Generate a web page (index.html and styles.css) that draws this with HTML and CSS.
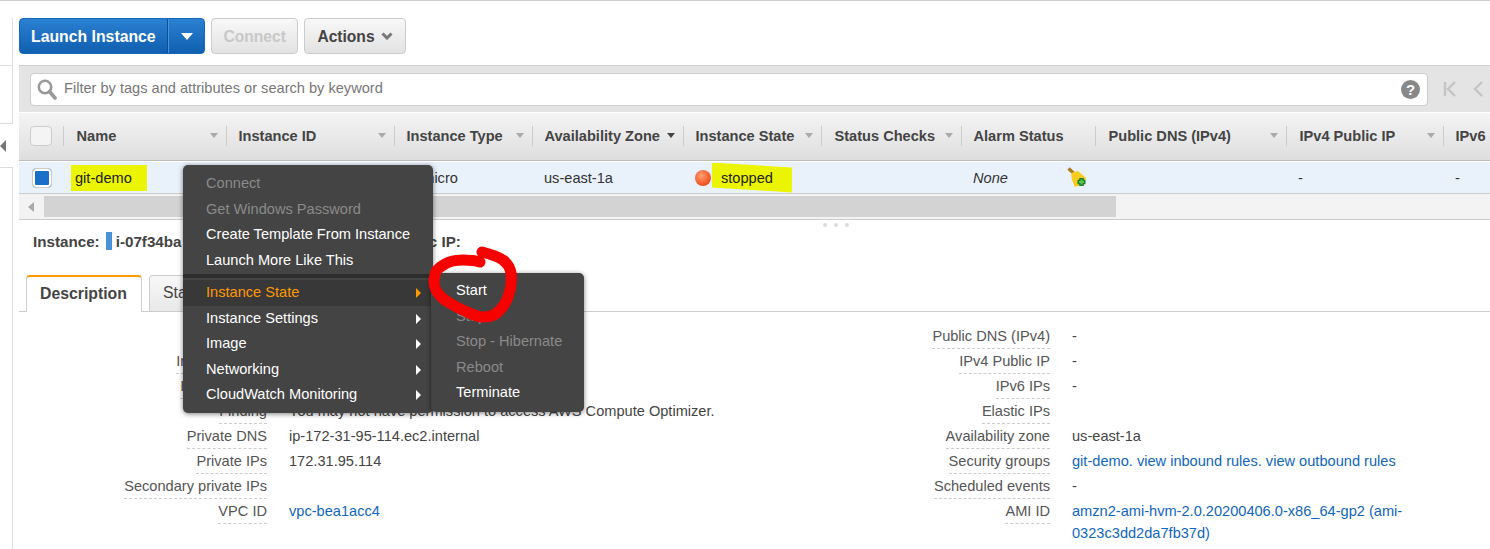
FILE: index.html
```html
<!DOCTYPE html>
<html>
<head>
<meta charset="utf-8">
<title>EC2 Instances</title>
<link rel="stylesheet" href="styles.css">
</head>
<body>
<div class="page">
	<div class="rail">
		<div class="rail-a"></div>
		<div class="rail-b"></div>
		<div class="rail-c"><span class="rail-arrow"></span></div>
		<div class="rail-d"></div>
	</div>
	<div class="main">
		<div class="toolbar">
			<div class="btn-launch">
				<span class="launch-text">Launch Instance</span>
				<span class="launch-drop"><span class="caret-white"></span></span>
			</div>
			<div class="btn btn-off">Connect</div>
			<div class="btn btn-actions">Actions
				<svg class="chev" width="12" height="8" viewBox="0 0 12 8"><path d="M1.5 1.5 L6 6 L10.5 1.5" fill="none" stroke="#777" stroke-width="3"/></svg>
			</div>
		</div>

		<div class="filterbar">
			<div class="filter">
				<svg class="search" width="20" height="22" viewBox="0 0 20 22"><circle cx="8" cy="9" r="6.2" fill="none" stroke="#999" stroke-width="2.6"/><path d="M12.5 13.5 L18 20" stroke="#999" stroke-width="3.6" stroke-linecap="round"/></svg>
				<span class="filter-text">Filter by tags and attributes or search by keyword</span>
				<span class="help">?</span>
			</div>
			<div class="pager">
				<svg width="14" height="18" viewBox="0 0 14 18"><path d="M2 2 V16 M12 2 L5 9 L12 16" fill="none" stroke="#c4c4c4" stroke-width="2.4"/></svg>
				<svg width="10" height="18" viewBox="0 0 10 18"><path d="M9 2 L2 9 L9 16" fill="none" stroke="#c4c4c4" stroke-width="2.4"/></svg>
			</div>
		</div>

		<div class="thead">
			<div class="col-check"><span class="check"></span></div>
			<div class="th th-wide w-name">Name<span class="sort"></span></div>
			<div class="th w-id">Instance ID<span class="sort"></span></div>
			<div class="th w-type">Instance Type<span class="sort"></span></div>
			<div class="th w-az">Availability Zone<span class="sort sort-on"></span></div>
			<div class="th w-state">Instance State<span class="sort"></span></div>
			<div class="th th-wide w-status">Status Checks<span class="sort"></span></div>
			<div class="th w-alarm">Alarm Status</div>
			<div class="th th-wide w-dns">Public DNS (IPv4)<span class="sort"></span></div>
			<div class="th th-wide w-ip">IPv4 Public IP<span class="sort"></span></div>
			<div class="th w-six">IPv6</div>
		</div>

		<div class="trow">
			<div class="col-check"><span class="check check-on"></span></div>
			<div class="td w-name"><span class="mark mark-name">git-demo</span></div>
			<div class="td w-id">i-07f34ba</div>
			<div class="td w-type">t2.micro</div>
			<div class="td w-az">us-east-1a</div>
			<div class="td w-state"><span class="dot"></span><span class="mark mark-state">stopped</span></div>
			<div class="td w-status"></div>
			<div class="td w-alarm"><em>None</em>
				<svg class="broom" width="20" height="21" viewBox="0 0 20 21">
					<path d="M1.5 1.5 L7 6.5" stroke="#a8781a" stroke-width="3.2"/>
					<path d="M4 6 L11 4 L19 11 L17 17 L11 19 L8 20 L5 13 Z" fill="#f6cc1e"/>
					<path d="M14.5 11 V19 M10.5 15 H18.5" stroke="#1f7f2a" stroke-width="4.6"/>
					<path d="M14.5 12.5 V17.5 M12 15 H17" stroke="#58c84a" stroke-width="2"/>
				</svg>
			</div>
			<div class="td w-dns"></div>
			<div class="td w-ip">-</div>
			<div class="td w-six">-</div>
		</div>

		<div class="hscroll">
			<span class="hscroll-arrow"></span>
			<span class="hscroll-thumb"></span>
		</div>

		<div class="resizer"><i></i><i></i><i></i></div>

		<div class="instance-line">
			<b>Instance:</b>
			<span class="id-bar"></span>
			<b class="id-text">i-07f34ba</b>
			<b>Public IP:</b>
		</div>

		<div class="tabs">
			<div class="tab tab-on">Description</div>
			<div class="tab">Status Checks</div>
		</div>

		<div class="details">
			<div class="dcol dcol-left">
				<div class="drow"><span class="dt"><span>Instance ID</span></span><span class="dd">i-07f34ba</span></div>
				<div class="drow"><span class="dt"><span>Instance state</span></span><span class="dd">stopped</span></div>
				<div class="drow"><span class="dt"><span>Instance type</span></span><span class="dd">t2.micro</span></div>
				<div class="drow"><span class="dt"><span>Finding</span></span><span class="dd">You may not have permission to access AWS Compute Optimizer.</span></div>
				<div class="drow"><span class="dt"><span>Private DNS</span></span><span class="dd">ip-172-31-95-114.ec2.internal</span></div>
				<div class="drow"><span class="dt"><span>Private IPs</span></span><span class="dd">172.31.95.114</span></div>
				<div class="drow"><span class="dt"><span>Secondary private IPs</span></span><span class="dd"></span></div>
				<div class="drow"><span class="dt"><span>VPC ID</span></span><span class="dd link">vpc-bea1acc4</span></div>
			</div>
			<div class="dcol dcol-right">
				<div class="drow"><span class="dt"><span>Public DNS (IPv4)</span></span><span class="dd">-</span></div>
				<div class="drow"><span class="dt"><span>IPv4 Public IP</span></span><span class="dd">-</span></div>
				<div class="drow"><span class="dt"><span>IPv6 IPs</span></span><span class="dd">-</span></div>
				<div class="drow"><span class="dt"><span>Elastic IPs</span></span><span class="dd"></span></div>
				<div class="drow"><span class="dt"><span>Availability zone</span></span><span class="dd">us-east-1a</span></div>
				<div class="drow"><span class="dt"><span>Security groups</span></span><span class="dd link">git-demo. view inbound rules. view outbound rules</span></div>
				<div class="drow"><span class="dt"><span>Scheduled events</span></span><span class="dd">-</span></div>
				<div class="drow"><span class="dt"><span>AMI ID</span></span><span class="dd link dd-wrap">amzn2-ami-hvm-2.0.20200406.0-x86_64-gp2 (ami-0323c3dd2da7fb37d)</span></div>
			</div>
		</div>
	</div>
</div>

<div class="menu">
	<div class="mi mi-off">Connect</div>
	<div class="mi mi-off">Get Windows Password</div>
	<div class="mi">Create Template From Instance</div>
	<div class="mi">Launch More Like This</div>
	<div class="msep"></div>
	<div class="mi mi-open">Instance State<span class="arrow arrow-orange"></span></div>
	<div class="mi">Instance Settings<span class="arrow"></span></div>
	<div class="mi">Image<span class="arrow"></span></div>
	<div class="mi">Networking<span class="arrow"></span></div>
	<div class="mi">CloudWatch Monitoring<span class="arrow"></span></div>
</div>
<div class="submenu">
	<div class="mi">Start</div>
	<div class="mi mi-off">Stop</div>
	<div class="mi mi-off">Stop - Hibernate</div>
	<div class="mi mi-off">Reboot</div>
	<div class="mi">Terminate</div>
</div>
<svg class="scribble" width="100" height="90" viewBox="425 240 100 90">
	<path d="M480 262 C474 260 468 260 463 260 C456 260 450 261 445 264 C438 268 435 271 435 275 C433 281 434 286 436 290 C439 296 443 299 448 302 C454 306 460 309 467 312 C473 315 478 317 483 317 C489 317 494 316 498 312 C503 307 506 303 508 297 C511 289 512 281 511 273 C510 267 507 263 503 260 C497 256 490 254 482 252" fill="none" stroke="#f60000" stroke-width="11" stroke-linecap="round"/>
</svg>
</body>
</html>
```

FILE: styles.css
```css
html, body {
	margin: 0;
	height: 549px;
	overflow: hidden;
	background: #fff;
}
body {
	font-family: "Liberation Sans", Arial, sans-serif;
	font-size: 14.6px;
	color: #444;
}
.page {
	display: flex;
	height: 548px;
	border-top: 1px solid #ccc;
}

/* left rail */
.rail {
	width: 13px;
	flex: none;
	display: flex;
	flex-direction: column;
}
.rail-a {
	height: 17px;
}
.rail-b {
	height: 47px;
	border-right: 1px solid #ddd;
	border-bottom: 1px solid #ddd;
}
.rail-c {
	height: 57px;
	border-right: 1px solid #ddd;
	border-bottom: 1px solid #ddd;
	position: relative;
}
.rail-d {
	flex: 1;
	margin-top: 43px;
	border-right: 1px solid #ddd;
	border-top: 1px solid #ddd;
}
.rail-arrow {
	position: absolute;
	left: 0;
	top: 74px;
	border: 6px solid transparent;
	border-left: 0;
	border-right: 6px solid #777;
}

.main {
	margin-left: 6px;
	width: 1471px;
	flex: none;
	overflow: hidden;
}

/* toolbar */
.toolbar {
	display: flex;
	gap: 6px;
	margin-top: 17px;
	height: 36px;
}
.btn-launch {
	display: flex;
	width: 186px;
	height: 36px;
	box-sizing: border-box;
	background: linear-gradient(#2b80d2, #105fb0);
	border: 1px solid #1a68b8;
	border-radius: 4px;
	color: #fff;
	font-size: 15.8px;
	font-weight: bold;
	line-height: 35px;
}
.launch-text {
	width: 148px;
	padding-left: 11px;
	box-sizing: border-box;
	border-right: 1px solid #0d4f96;
}
.launch-drop {
	flex: 1;
	border-left: 1px solid #4a94dc;
	display: flex;
	align-items: center;
	justify-content: center;
}
.caret-white {
	border: 6px solid transparent;
	border-top: 7px solid #fff;
	border-bottom: 0;
}
.btn {
	height: 36px;
	box-sizing: border-box;
	padding: 0 11.5px;
	background: linear-gradient(#f8f8f8, #e2e2e2);
	border: 1px solid #ccc;
	border-radius: 4px;
	font-size: 15.6px;
	font-weight: bold;
	line-height: 35px;
	color: #444;
}
.btn-off {
	color: #c8c8c8;
}
.btn-actions {
	padding: 0 12px;
}
.chev {
	margin-left: 2px;
	vertical-align: 2px;
}

/* filter */
.filterbar {
	display: flex;
	align-items: center;
	height: 46px;
	margin-top: 11px;
	background: #e4e4e4;
	border-top: 1px solid #ccc;
	padding-left: 11px;
}
.filter {
	width: 1398px;
	height: 33px;
	box-sizing: border-box;
	display: flex;
	align-items: center;
	background: #fff;
	border: 1px solid #ccc;
	border-radius: 4px;
	padding-left: 6px;
}
.search {
	flex: none;
}
.filter-text {
	margin: 0 0 2px 7px;
	flex: 1;
	color: #777;
}
.help {
	width: 19px;
	height: 19px;
	margin-right: 7px;
	border-radius: 50%;
	background: #888;
	color: #fff;
	font-size: 15px;
	font-weight: bold;
	line-height: 19px;
	text-align: center;
}
.pager {
	display: flex;
	align-items: center;
	gap: 16px;
	margin-left: 15px;
}

/* table */
.thead, .trow {
	display: flex;
	width: 1560px;
}
.thead {
	height: 45px;
	padding-bottom: 2px;
	align-items: center;
	background: linear-gradient(#f4f4f4, #dedede);
	border-top: 1px solid #fff;
	border-bottom: 1px solid #bbb;
}
.trow {
	height: 31px;
	align-items: center;
	margin-top: 1px;
	background: #e9f1fb;
	border-bottom: 1px solid #ccc;
}
.col-check {
	width: 44px;
	flex: none;
	box-sizing: border-box;
	padding-left: 11px;
	display: flex;
}
.check {
	width: 22px;
	height: 20px;
	box-sizing: border-box;
	background: #f4f4f4;
	border: 1px solid #ccc;
	border-radius: 4px;
}
.check-on {
	width: 20px;
	margin-left: 2px;
	background: #1a6fc9;
	box-shadow: inset 0 0 0 2px #fff;
}
.th {
	flex: none;
	box-sizing: border-box;
	height: 20px;
	line-height: 20px;
	border-left: 1px solid #ccc;
	padding: 0 8px 0 11.5px;
	display: flex;
	justify-content: space-between;
	align-items: center;
	font-weight: bold;
}
.th-wide {
	padding-left: 12.5px;
}
.td {
	flex: none;
	box-sizing: border-box;
	padding-left: 12px;
	display: flex;
	align-items: center;
	color: #333;
}
.w-name { width: 163px; }
.w-id { width: 168px; }
.w-type { width: 138px; }
.w-az { width: 151px; }
.w-state { width: 138px; }
.w-status { width: 140px; }
.w-alarm { width: 134px; }
.w-dns { width: 191px; }
.w-ip { width: 157px; }
.w-six { width: 117px; }
.sort {
	border: 4px solid transparent;
	border-top: 5px solid #aaa;
	border-bottom: 0;
}
.sort-on {
	border-top-color: #444;
}
.mark {
	background: #ebf500;
	color: #222;
}
.mark-name {
	margin-left: -4px;
	padding: 5px 15px 5px 4px;
}
.mark-state {
	margin-left: 1px;
	padding: 7px 19px 7px 9px;
	clip-path: polygon(0 0, 100% 17%, 100% 100%, 0 83%);
}
.dot {
	width: 16px;
	height: 16px;
	border-radius: 50%;
	background: radial-gradient(circle at 40% 35%, #ffa070, #f0501e 70%);
}
.broom {
	margin-left: 59px;
}
.td em {
	font-style: italic;
}
.hscroll {
	display: flex;
	align-items: center;
	height: 25px;
	background: #f3f3f3;
	border-bottom: 1px solid #ccc;
}
.hscroll-arrow {
	margin-left: 9px;
	border: 5px solid transparent;
	border-left: 0;
	border-right: 6px solid #aaa;
}
.hscroll-thumb {
	margin-left: 10px;
	width: 1072px;
	height: 21px;
	background: #d3d3d3;
}
.resizer {
	display: flex;
	justify-content: center;
	gap: 7px;
	height: 7px;
	margin-left: 803px;
	width: 28px;
}
.resizer i {
	width: 4px;
	height: 4px;
	margin-top: 3px;
	background: #ddd;
	border-radius: 50%;
}

/* instance line */
.instance-line {
	display: flex;
	align-items: center;
	height: 18px;
	margin-top: 5px;
	padding-left: 14px;
	font-size: 15.2px;
}
.id-bar {
	width: 6px;
	height: 18px;
	margin: 0 4px 0 6px;
	background: #4a90d6;
}
.id-text {
	width: 276px;
}

/* tabs */
.tabs {
	display: flex;
	gap: 7px;
	height: 36px;
	margin-top: 25px;
	padding-left: 7px;
	border-bottom: 1px solid #ccc;
}
.tab {
	width: 116px;
	height: 36px;
	box-sizing: border-box;
	background: linear-gradient(#f8f8f8, #e8e8e8);
	border: 1px solid #ccc;
	border-bottom: 0;
	border-radius: 4px 4px 0 0;
	padding-left: 13px;
	font-size: 15.8px;
	line-height: 34px;
	white-space: nowrap;
}
.tab-on {
	height: 37px;
	background: #fff;
	border-top: 2px solid #f90;
	font-weight: bold;
}

/* details */
.details {
	display: flex;
	padding-top: 12px;
}
.dcol-left {
	width: 783px;
}
.dcol-right {
	flex: 1;
}
.drow {
	display: flex;
	min-height: 25px;
	line-height: 25px;
}
.dt {
	flex: none;
	width: 248px;
	text-align: right;
	color: #555;
}
.dt span {
	display: inline-block;
	height: 23px;
	line-height: 23px;
	border-bottom: 1px dashed #ccc;
}
.dd {
	margin-left: 22px;
	padding-top: 1px;
	line-height: 22px;
	color: #444;
}
.dd-wrap {
	width: 340px;
}
.link {
	color: #1166bb;
}

/* context menu */
.menu, .submenu {
	position: absolute;
	box-sizing: border-box;
	background: #444;
	border-radius: 5px;
	box-shadow: 0 1px 5px rgba(0, 0, 0, 0.5);
}
.menu {
	left: 183px;
	top: 165px;
	width: 250px;
	height: 248px;
	padding-top: 6px;
}
.submenu {
	left: 431px;
	top: 273px;
	width: 153px;
	height: 139px;
	padding-top: 5.4px;
}
.mi {
	position: relative;
	height: 25.5px;
	line-height: 25.5px;
	padding-left: 23px;
	color: #fff;
}
.submenu .mi {
	padding-left: 25px;
}
.mi-off {
	color: #8a8a8a;
}
.mi-open {
	background: #383838;
	color: #f90;
}
.msep {
	height: 4px;
	margin: 1px 0 2px;
	background: #2e2e2e;
}
.arrow {
	position: absolute;
	right: 12px;
	top: 8px;
	border: 5px solid transparent;
	border-right: 0;
	border-left: 5px solid #fff;
}
.arrow-orange {
	border-left-color: #f90;
}
.scribble {
	position: absolute;
	left: 425px;
	top: 240px;
}
```
